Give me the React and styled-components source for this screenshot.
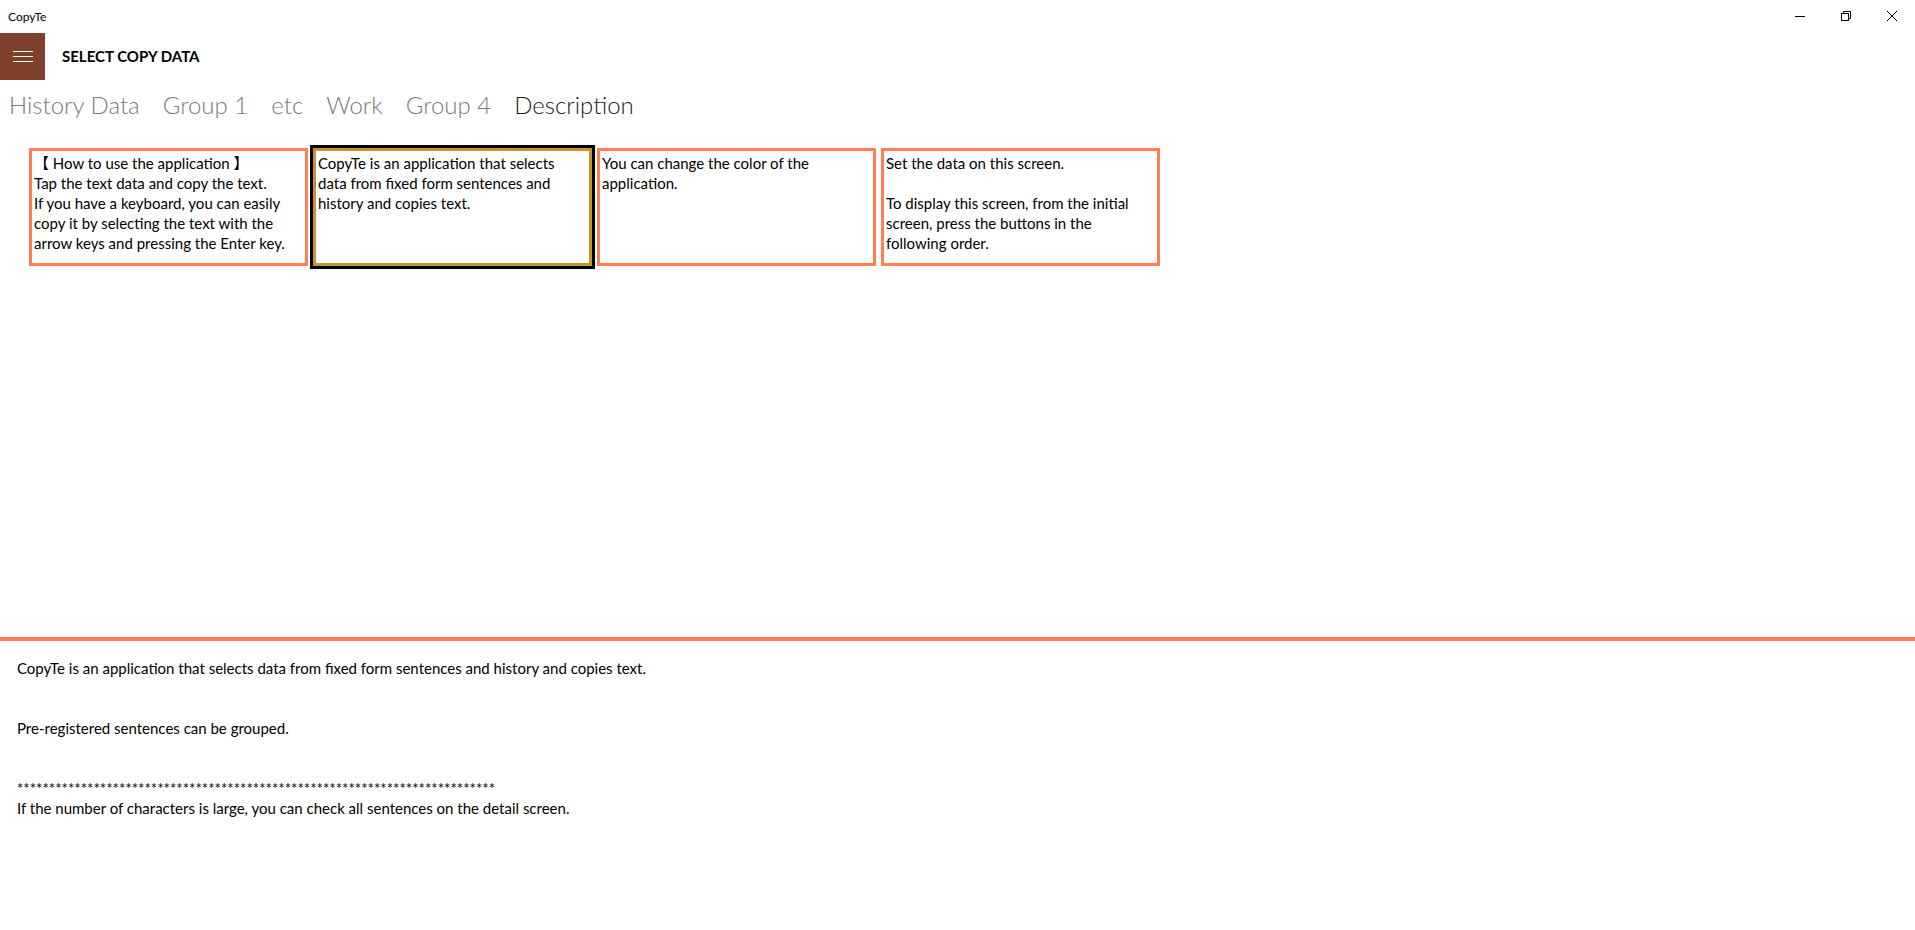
import React from "react";
import styled, { createGlobalStyle } from "styled-components";

const GlobalStyle = createGlobalStyle`
  html, body {
    margin: 0;
    padding: 0;
    background: #ffffff;
  }
  body {
    font-family: "Lato", "Noto Sans CJK JP", sans-serif;
    color: #000;
  }
`;

const Page = styled.div`
  display: flex;
  flex-direction: column;
  height: 930px;
  overflow: hidden;
`;

const TitleBar = styled.div`
  display: flex;
  align-items: center;
  height: 32px;
  padding-left: 8px;
  font-size: 12px;
`;

const TitleText = styled.span`
  flex: 1;
`;

const WinButton = styled.div`
  display: flex;
  align-items: center;
  justify-content: center;
  width: 46px;
  height: 32px;
`;

const Header = styled.div`
  display: flex;
  align-items: center;
  height: 48px;
`;

const MenuButton = styled.div`
  display: flex;
  flex-direction: column;
  justify-content: center;
  align-items: center;
  gap: 4px;
  width: 45px;
  height: 47px;
  background: #7e3f2b;
`;

const MenuLine = styled.span`
  display: block;
  width: 20px;
  height: 1px;
  background: #ffffff;
`;

const PageTitle = styled.h1`
  margin: 0 0 0 17px;
  font-size: 15px;
  font-weight: 700;
`;

const Tabs = styled.div`
  display: flex;
  align-items: center;
  height: 48px;
  padding-left: 9px;
`;

const Tab = styled.span`
  font-size: 24px;
  font-weight: 300;
  margin-right: 23px;
  color: ${(p) => (p.$active ? "#1a1a1a" : "#7a7a7a")};
`;

const CardRow = styled.div`
  display: flex;
  gap: 5px;
  padding: 20px 0 0 29px;
`;

const Card = styled.div`
  box-sizing: border-box;
  width: 279px;
  height: 118px;
  padding: 2px 2px;
  border: 3px solid ${(p) => (p.$focused ? "#c8922c" : "#ff7f50")};
  box-shadow: ${(p) => (p.$focused ? "0 0 0 3px #000" : "none")};
  font-size: 15px;
  line-height: 20px;
  white-space: pre-line;
  overflow: hidden;
`;

const Spacer = styled.div`
  flex: 1;
`;

const Detail = styled.div`
  box-sizing: border-box;
  height: 293px;
  border-top: 4px solid #ff7f50;
  padding: 17px 17px 0;
  font-size: 15px;
  line-height: 20px;
  white-space: pre-line;
`;

const cards = [
  "【 How to use the application 】\nTap the text data and copy the text.\nIf you have a keyboard, you can easily\ncopy it by selecting the text with the\narrow keys and pressing the Enter key.",
  "CopyTe is an application that selects\ndata from fixed form sentences and\nhistory and copies text.",
  "You can change the color of the\napplication.",
  "Set the data on this screen.\n\nTo display this screen, from the initial\nscreen, press the buttons in the\nfollowing order.",
];

const tabs = ["History Data", "Group 1", "etc", "Work", "Group 4", "Description"];

const detailText =
  "CopyTe is an application that selects data from fixed form sentences and history and copies text.\n\n\nPre-registered sentences can be grouped.\n\n\n" +
  "*".repeat(75) +
  "\nIf the number of characters is large, you can check all sentences on the detail screen.";

const App = () => {
  return (
    <Page>
      <GlobalStyle />
      <TitleBar>
        <TitleText>CopyTe</TitleText>
        <WinButton>
          <svg width="10" height="10" viewBox="0 0 10 10">
            <path d="M0 5.5h10" stroke="#000" strokeWidth="1" />
          </svg>
        </WinButton>
        <WinButton>
          <svg width="10" height="10" viewBox="0 0 10 10" fill="none" stroke="#000" strokeWidth="1">
            <rect x="0.5" y="2.5" width="7" height="7" />
            <path d="M2.5 2.5v-2h7v7h-2" />
          </svg>
        </WinButton>
        <WinButton>
          <svg width="10" height="10" viewBox="0 0 10 10" stroke="#000" strokeWidth="1">
            <path d="M0 0l10 10M10 0l-10 10" />
          </svg>
        </WinButton>
      </TitleBar>
      <Header>
        <MenuButton>
          <MenuLine />
          <MenuLine />
          <MenuLine />
        </MenuButton>
        <PageTitle>SELECT COPY DATA</PageTitle>
      </Header>
      <Tabs>
        {tabs.map((t) => (
          <Tab key={t} $active={t === "Description"}>
            {t}
          </Tab>
        ))}
      </Tabs>
      <CardRow>
        {cards.map((c, i) => (
          <Card key={i} $focused={i === 1}>
            {c}
          </Card>
        ))}
      </CardRow>
      <Spacer />
      <Detail>{detailText}</Detail>
    </Page>
  );
};

export default App;
